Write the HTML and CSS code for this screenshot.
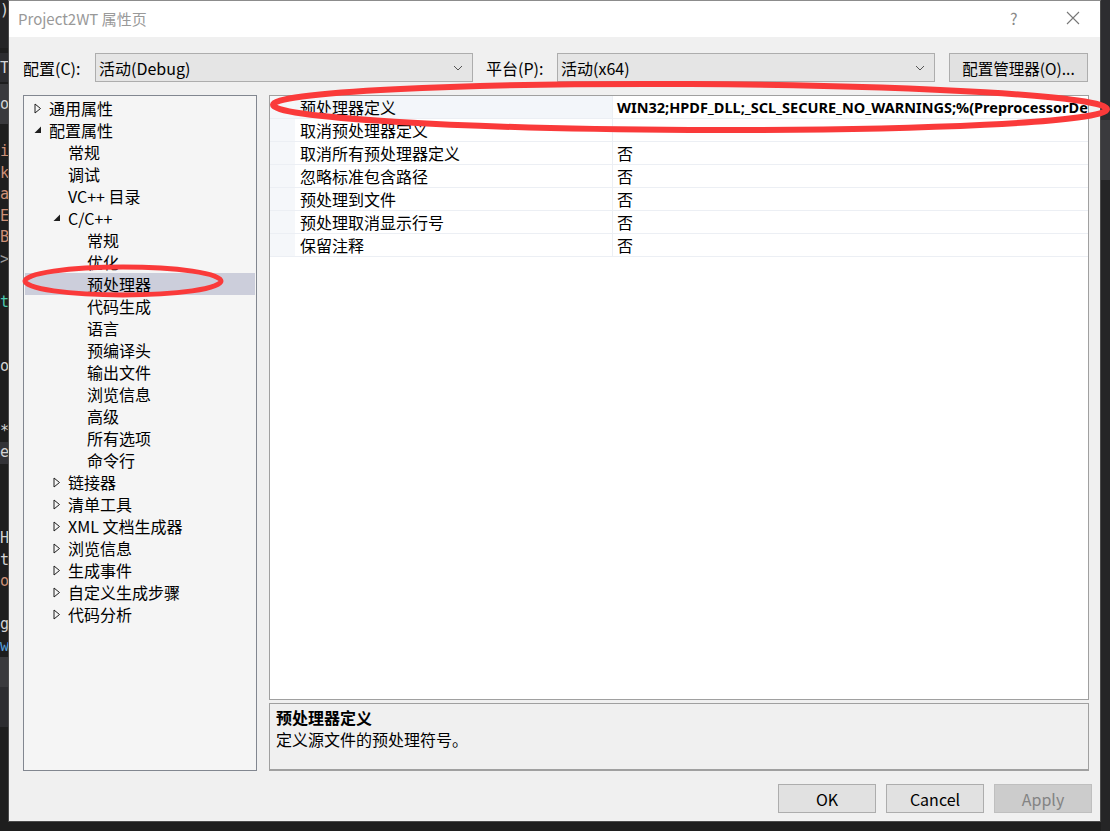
FILE: index.html
```html
<!DOCTYPE html>
<html lang="zh-CN">
<head>
<meta charset="utf-8">
<title>Project2WT 属性页</title>
<link rel="stylesheet" href="styles.css">
</head>
<body>
<div class="screen">
  <div class="editor">
    <div class="ed-blk b0 c-w">)</div>
    <div class="ed-blk b1"></div>
    <div class="ed-blk b2 c-w">T.</div>
    <div class="ed-blk b1s"></div>
    <div class="ed-blk b3 c-w">op</div>
    <div class="ed-blk b4"></div>
    <div class="ed-line c-o">i</div>
    <div class="ed-line c-o">k</div>
    <div class="ed-line c-o">a</div>
    <div class="ed-line c-o">E</div>
    <div class="ed-line c-o">B</div>
    <div class="ed-line c-g">&gt;</div>
    <div class="ed-line"></div>
    <div class="ed-line c-t">t</div>
    <div class="ed-line"></div>
    <div class="ed-line"></div>
    <div class="ed-line c-w">o</div>
    <div class="ed-line"></div>
    <div class="ed-line"></div>
    <div class="ed-line c-w">*</div>
    <div class="ed-line band-c c-w">e</div>
    <div class="ed-line"></div>
    <div class="ed-line"></div>
    <div class="ed-line"></div>
    <div class="ed-line c-w">H</div>
    <div class="ed-line c-w">t</div>
    <div class="ed-line c-o">o</div>
    <div class="ed-line"></div>
    <div class="ed-line c-w">g</div>
    <div class="ed-line c-b">w</div>
    <div class="ed-blk b5"></div>
    <div class="ed-blk b6"></div>
  </div>

  <div class="dialog">
    <div class="titlebar">
      <span class="title">Project2WT 属性页</span>
      <span class="tb-help">?</span>
      <span class="tb-close">
        <svg width="14" height="14" viewBox="0 0 14 14"><path d="M1 1 L13 13 M13 1 L1 13" stroke="#777" stroke-width="1.1" fill="none"/></svg>
      </span>
    </div>

    <div class="body">
      <div class="config-row">
        <label class="cfg-label lbl1">配置(C):</label>
        <div class="combo"><span>活动(Debug)</span>
          <svg class="chev" width="10" height="6" viewBox="0 0 10 6"><path d="M1 1 L5 5 L9 1" stroke="#555" fill="none"/></svg></div>
        <label class="cfg-label lbl2">平台(P):</label>
        <div class="combo"><span>活动(x64)</span>
          <svg class="chev" width="10" height="6" viewBox="0 0 10 6"><path d="M1 1 L5 5 L9 1" stroke="#555" fill="none"/></svg></div>
        <button class="btn cfg-btn">配置管理器(O)...</button>
      </div>

      <div class="main">
        <div class="tree">
          <div class="node l0"><span class="exp"><svg width="8" height="11" viewBox="0 0 8 11"><path d="M1 1 L6.5 5.5 L1 10 Z" fill="none" stroke="#1e1e1e"/></svg></span>通用属性</div>
          <div class="node l0"><span class="exp"><svg width="8" height="8" viewBox="0 0 8 8"><path d="M7 0.5 L7 7 L0.5 7 Z" fill="#1e1e1e"/></svg></span>配置属性</div>
          <div class="node l1"><span class="exp"></span>常规</div>
          <div class="node l1"><span class="exp"></span>调试</div>
          <div class="node l1"><span class="exp"></span>VC++ 目录</div>
          <div class="node l1"><span class="exp"><svg width="8" height="8" viewBox="0 0 8 8"><path d="M7 0.5 L7 7 L0.5 7 Z" fill="#1e1e1e"/></svg></span>C/C++</div>
          <div class="node l2"><span class="exp"></span>常规</div>
          <div class="node l2"><span class="exp"></span>优化</div>
          <div class="node l2 selected"><span class="exp"></span>预处理器</div>
          <div class="node l2"><span class="exp"></span>代码生成</div>
          <div class="node l2"><span class="exp"></span>语言</div>
          <div class="node l2"><span class="exp"></span>预编译头</div>
          <div class="node l2"><span class="exp"></span>输出文件</div>
          <div class="node l2"><span class="exp"></span>浏览信息</div>
          <div class="node l2"><span class="exp"></span>高级</div>
          <div class="node l2"><span class="exp"></span>所有选项</div>
          <div class="node l2"><span class="exp"></span>命令行</div>
          <div class="node l1"><span class="exp"><svg width="8" height="11" viewBox="0 0 8 11"><path d="M1 1 L6.5 5.5 L1 10 Z" fill="none" stroke="#1e1e1e"/></svg></span>链接器</div>
          <div class="node l1"><span class="exp"><svg width="8" height="11" viewBox="0 0 8 11"><path d="M1 1 L6.5 5.5 L1 10 Z" fill="none" stroke="#1e1e1e"/></svg></span>清单工具</div>
          <div class="node l1"><span class="exp"><svg width="8" height="11" viewBox="0 0 8 11"><path d="M1 1 L6.5 5.5 L1 10 Z" fill="none" stroke="#1e1e1e"/></svg></span>XML 文档生成器</div>
          <div class="node l1"><span class="exp"><svg width="8" height="11" viewBox="0 0 8 11"><path d="M1 1 L6.5 5.5 L1 10 Z" fill="none" stroke="#1e1e1e"/></svg></span>浏览信息</div>
          <div class="node l1"><span class="exp"><svg width="8" height="11" viewBox="0 0 8 11"><path d="M1 1 L6.5 5.5 L1 10 Z" fill="none" stroke="#1e1e1e"/></svg></span>生成事件</div>
          <div class="node l1"><span class="exp"><svg width="8" height="11" viewBox="0 0 8 11"><path d="M1 1 L6.5 5.5 L1 10 Z" fill="none" stroke="#1e1e1e"/></svg></span>自定义生成步骤</div>
          <div class="node l1"><span class="exp"><svg width="8" height="11" viewBox="0 0 8 11"><path d="M1 1 L6.5 5.5 L1 10 Z" fill="none" stroke="#1e1e1e"/></svg></span>代码分析</div>
        </div>

        <div class="right">
          <div class="grid">
            <div class="prow current"><div class="gutter"></div><div class="pname">预处理器定义</div><div class="pval bold">WIN32;HPDF_DLL;_SCL_SECURE_NO_WARNINGS;%(PreprocessorDefinitions)</div></div>
            <div class="prow"><div class="gutter"></div><div class="pname">取消预处理器定义</div><div class="pval"></div></div>
            <div class="prow"><div class="gutter"></div><div class="pname">取消所有预处理器定义</div><div class="pval">否</div></div>
            <div class="prow"><div class="gutter"></div><div class="pname">忽略标准包含路径</div><div class="pval">否</div></div>
            <div class="prow"><div class="gutter"></div><div class="pname">预处理到文件</div><div class="pval">否</div></div>
            <div class="prow"><div class="gutter"></div><div class="pname">预处理取消显示行号</div><div class="pval">否</div></div>
            <div class="prow"><div class="gutter"></div><div class="pname">保留注释</div><div class="pval">否</div></div>
          </div>
          <div class="desc">
            <div class="desc-title">预处理器定义</div>
            <div class="desc-text">定义源文件的预处理符号。</div>
          </div>
        </div>
      </div>

      <div class="buttons">
        <button class="btn dlg-btn">OK</button>
        <button class="btn dlg-btn">Cancel</button>
        <button class="btn dlg-btn disabled">Apply</button>
      </div>
    </div>
  </div>

  <div class="side-right">
    <div class="sr-a"></div>
    <div class="sr-b"></div>
    <div class="sr-c"></div>
  </div>

  <svg class="marks" width="1110" height="831" viewBox="0 0 1110 831">
    <ellipse cx="690" cy="107" rx="417" ry="23" fill="none" stroke="#fa3a3a" stroke-width="6" transform="rotate(0.3 690 107)"/>
    <ellipse cx="123" cy="281" rx="98" ry="14" fill="none" stroke="#fa3a3a" stroke-width="5"/>
  </svg>
</div>
</body>
</html>
```

FILE: styles.css
```css
* { box-sizing: border-box; }
html, body {
  margin: 0;
  padding: 0;
  width: 1110px;
  height: 831px;
  overflow: hidden;
  background: #1e1e1e;
}
body {
  font-family: "Noto Sans CJK SC", "Noto Sans", sans-serif;
  font-size: 16px;
  color: #000;
}
.screen {
  position: relative;
  display: flex;
  width: 1110px;
  height: 831px;
}

/* editor strip on the left */
.editor {
  width: 8px;
  flex: none;
  overflow: hidden;
  background: #1e1e1e;
  font-family: "DejaVu Sans Mono", monospace;
  font-size: 15px;
}
.ed-blk { white-space: nowrap; display: flex; align-items: center; }
.b0 { height: 48px; background: #252526; align-items: flex-start; line-height: 20px; }
.b1 { height: 5px; }
.b2 { height: 29px; background: #2d2d30; }
.b1s { height: 2px; }
.b3 { height: 40px; background: #3a3a3d; }
.b4 { height: 17px; }
.b5 { height: 30px; background: #3a3a3d; }
.b6 { height: 40px; background: #2d2d30; }
.ed-line {
  height: 21.5px;
  line-height: 21px;
  white-space: nowrap;
}
.band-c { background: #333337; }
.c-w { color: #d4d4d4; }
.c-o { color: #ce9178; }
.c-g { color: #9a9a9a; }
.c-t { color: #4ec9b0; }
.c-b { color: #569cd6; }

/* dialog */
.dialog {
  width: 1093px;
  height: 822px;
  flex: none;
  background: #f0f0f0;
  border: 1px solid #4a4a4a;
  border-top-color: #8c8c8c;
  display: flex;
  flex-direction: column;
}
.titlebar {
  height: 36px;
  background: #fff;
  display: flex;
  align-items: center;
  padding-left: 9px;
  flex: none;
}
.title {
  color: #999;
  font-size: 15px;
  flex: 1;
  padding-bottom: 2px;
}
.tb-help {
  color: #888;
  font-size: 16px;
  width: 56px;
  padding-bottom: 3px;
}
.tb-close {
  width: 34px;
  display: flex;
  align-items: center;
  padding-bottom: 3px;
}

.body {
  flex: 1;
  display: flex;
  flex-direction: column;
  padding: 16px 11px 8px 14px;
}

.config-row {
  display: flex;
  align-items: center;
  height: 29px;
  flex: none;
}
.cfg-label {
  flex: none;
}
.lbl1 { width: 72px; }
.lbl2 { width: 71px; margin-left: 13px; }
.combo {
  width: 378px;
  height: 29px;
  flex: none;
  background: #e5e5e5;
  border: 1px solid #adadad;
  display: flex;
  align-items: center;
  justify-content: space-between;
  padding: 0 9px 0 3px;
}
.chev { margin-top: 1px; }
.btn {
  font-family: "Noto Sans CJK SC", "Noto Sans", sans-serif;
  font-size: 16px;
  background: #e1e1e1;
  border: 1px solid #adadad;
  color: #000;
  padding: 0;
  margin: 0;
}
.cfg-btn {
  width: 139px;
  height: 29px;
  margin-left: 14px;
  font-size: 15.5px;
}

.main {
  display: flex;
  gap: 12px;
  margin-top: 13px;
  height: 676px;
  flex: none;
}

/* tree */
.tree {
  width: 234px;
  flex: none;
  background: #f5f5f5;
  border: 1px solid #828790;
  padding: 1px 1px;
}
.node {
  height: 22px;
  line-height: 22px;
  display: flex;
  align-items: center;
  white-space: nowrap;
}
.exp {
  width: 15px;
  flex: none;
  display: flex;
  align-items: center;
  height: 22px;
}
.l0 { padding-left: 9px; }
.l1 { padding-left: 28px; }
.l2 { padding-left: 47px; }
.selected { background: #cccedb; }

/* right panel */
.right {
  width: 820px;
  flex: none;
  display: flex;
  flex-direction: column;
}
.grid {
  height: 605px;
  flex: none;
  background: #fff;
  border: 1px solid #a0a0a0;
  overflow: hidden;
}
.prow {
  display: flex;
  height: 23px;
  border-bottom: 1px solid #eceff4;
}
.gutter {
  width: 25px;
  flex: none;
  background: #f5f7fa;
}
.pname {
  width: 318px;
  flex: none;
  padding-left: 5px;
  line-height: 23px;
  white-space: nowrap;
  border-right: 1px solid #eceff4;
}
.current .pname { background: #f3f6fa; }
.pval {
  flex: 1;
  padding-left: 4px;
  line-height: 23px;
  white-space: nowrap;
  overflow: hidden;
}
.bold {
  font-family: "Noto Sans", "Noto Sans CJK SC", sans-serif;
  font-weight: bold;
  font-size: 14.5px;
}

.desc {
  margin-top: 3px;
  height: 68px;
  flex: none;
  background: #f0f0f0;
  border: 1px solid #a0a0a0;
  border-bottom: 2px solid #a0a0a0;
  padding: 2px 6px;
}
.desc-title {
  font-weight: bold;
  line-height: 22px;
}
.desc-text {
  line-height: 22px;
}

.buttons {
  display: flex;
  justify-content: flex-end;
  gap: 10px;
  margin-top: 13px;
  margin-right: -3px;
}
.dlg-btn {
  width: 98px;
  height: 29px;
}
.dlg-btn.disabled {
  background: #cccccc;
  border-color: #bfbfbf;
  color: #838383;
}

.side-right {
  flex: 1;
  display: flex;
  flex-direction: column;
  background: #2d2d30;
}
.sr-a { height: 120px; background: #2d2d30; }
.sr-b { height: 60px; background: #3a3a3d; }
.sr-c { flex: 1; background: #252526; }

.marks {
  position: absolute;
  left: 0;
  top: 0;
  pointer-events: none;
}
```
